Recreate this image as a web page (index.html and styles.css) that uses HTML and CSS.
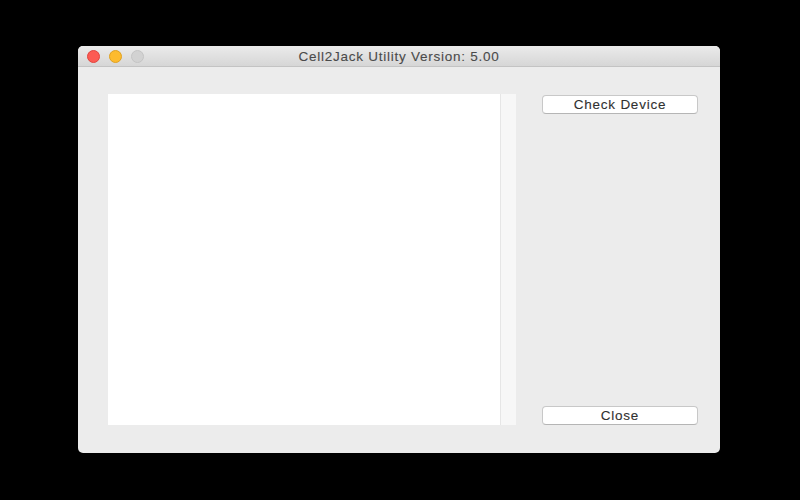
FILE: index.html
```html
<!DOCTYPE html>
<html>
<head>
<meta charset="utf-8">
<link rel="stylesheet" href="styles.css">
<title>Cell2Jack Utility</title>
</head>
<body>
<div class="window">
  <div class="titlebar">
    <div class="lights">
      <span class="light red"></span>
      <span class="light yellow"></span>
      <span class="light gray"></span>
    </div>
    <div class="title">Cell2Jack Utility Version: 5.00</div>
  </div>
  <div class="content">
    <div class="list">
      <div class="list-body"></div>
      <div class="scroll-track"></div>
    </div>
    <div class="actions">
      <button class="btn">Check Device</button>
      <button class="btn">Close</button>
    </div>
  </div>
</div>
</body>
</html>
```

FILE: styles.css
```css
html, body {
  margin: 0;
  padding: 0;
  background: #000;
  width: 800px;
  height: 500px;
  overflow: hidden;
}
body {
  padding: 46px 0 0 78px;
  box-sizing: border-box;
  font-family: "Liberation Sans", Arial, sans-serif;
}
.window {
  width: 642px;
  height: 407px;
  background: #ececec;
  border-radius: 5px;
  overflow: hidden;
  display: flex;
  flex-direction: column;
}
.titlebar {
  position: relative;
  height: 20px;
  flex: none;
  background: linear-gradient(#ebebeb, #d6d6d6);
  border-bottom: 1px solid #c3c3c3;
  display: flex;
  align-items: center;
  justify-content: center;
}
.lights {
  position: absolute;
  left: 9px;
  top: 4px;
  display: flex;
  gap: 9px;
}
.light {
  width: 13px;
  height: 13px;
  border-radius: 50%;
  box-sizing: border-box;
}
.red { background: #fc5b53; border: 1px solid #e0443e; }
.yellow { background: #fdbb2e; border: 1px solid #dea123; }
.gray { background: #d2d2d2; border: 1px solid #c4c4c4; }
.title {
  font-size: 13.5px;
  letter-spacing: 0.75px;
  color: #4a4a4a;
  padding-top: 1px;
  -webkit-text-stroke: 0.1px #4a4a4a;
}
.content {
  display: flex;
  padding: 27px 0 0 30px;
  gap: 26px;
}
.list {
  width: 408px;
  height: 331px;
  display: flex;
}
.list-body {
  flex: 1;
  background: #fff;
}
.scroll-track {
  width: 15px;
  background: #f7f7f7;
  border-left: 1px solid #e6e6e6;
}
.actions {
  width: 156px;
  height: 331px;
  display: flex;
  flex-direction: column;
  justify-content: space-between;
  padding-top: 1px;
  box-sizing: border-box;
}
.btn {
  height: 19px;
  width: 156px;
  padding: 0;
  margin: 0;
  background: #fff;
  border: 1px solid #c8c8c8;
  border-bottom-color: #b5b5b5;
  border-radius: 4px;
  font-family: "Liberation Sans", Arial, sans-serif;
  font-size: 13.5px;
  letter-spacing: 0.75px;
  color: #303030;
  -webkit-text-stroke: 0.1px #303030;
  line-height: 17px;
}
```
